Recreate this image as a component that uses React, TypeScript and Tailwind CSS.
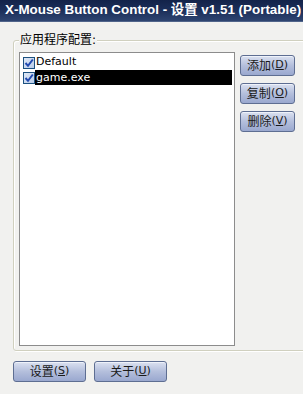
import React from "react";

const CJK = '"DejaVu Sans", "Noto Sans CJK SC", sans-serif';

function Check() {
  return (
    <div className="w-[12px] h-[12px] border border-[#1c5180] bg-gradient-to-br from-[#dfe8f6] to-[#b8cbe8] flex items-center justify-center shrink-0">
      <svg width="10" height="10" viewBox="0 0 10 10">
        <path d="M1.5 5 L4 7.8 L8.8 1.5" stroke="#2149b0" strokeWidth="2" fill="none" />
      </svg>
    </div>
  );
}

function Btn({ label, k, w }: { label: string; k: string; w: string }) {
  return (
    <div
      className={`${w} h-[21px] rounded-[3px] border border-[#5e6e92] bg-gradient-to-b from-[#dbe1f0] via-[#b4bfdc] to-[#9aa8cf] flex items-center justify-center text-[12px] text-[#1a1a1a] shadow-[inset_0_1px_0_#eef2fa]`}
      style={{ fontFamily: CJK }}
    >
      <span>{label}</span>
      <span className="text-[11px]">(</span>
      <span className="text-[11px] underline">{k}</span>
      <span className="text-[11px]">)</span>
    </div>
  );
}

export default function App() {
  return (
    <div className="w-[303px] h-[394px] bg-[#f1f1ef] overflow-hidden flex flex-col" style={{ fontFamily: CJK }}>
      <div className="h-[22px] bg-gradient-to-b from-[#13234a] via-[#1c2f5a] to-[#2e4470] border-b border-[#50648a] flex items-center pl-[5px] shrink-0">
        <span className="text-white font-bold text-[13.4px] whitespace-nowrap" style={{ fontFamily: '"Liberation Sans", "Noto Sans CJK SC", sans-serif' }}>
          X-Mouse Button Control - 设置 v1.51 (Portable)
        </span>
      </div>
      <div className="relative flex-1">
        <div className="absolute left-[13px] top-[18px] w-[310px] h-[311px] border border-[#d0d0bf] rounded-[3px] shadow-[inset_1px_1px_0_#ffffff,1px_1px_0_#ffffff]" />
        <div className="absolute left-[19px] top-[11px] bg-[#f1f1ef] px-[1px] text-[12px] leading-[14px] text-black">应用程序配置:</div>
        <div className="absolute left-[19px] top-[30px] w-[216px] h-[294px] bg-white border border-[#8c8c8c] py-[2px] pl-[3px] pr-[2px] flex flex-col">
          <div className="flex items-center h-[15px]">
            <Check />
            <span className="text-[11px] ml-[1px] text-black" style={{ fontFamily: '"DejaVu Sans", sans-serif' }}>Default</span>
          </div>
          <div className="flex items-center h-[15px]">
            <Check />
            <span className="flex-1 h-[15px] bg-black text-white text-[11px] pl-[1px] leading-[15px]" style={{ fontFamily: '"DejaVu Sans", sans-serif' }}>game.exe</span>
          </div>
        </div>
        <div className="absolute left-[240px] top-[33px] flex flex-col gap-[7px]">
          <Btn label="添加" k="D" w="w-[55px]" />
          <Btn label="复制" k="O" w="w-[55px]" />
          <Btn label="删除" k="V" w="w-[55px]" />
        </div>
        <div className="absolute left-[13px] top-[339px] flex gap-[8px]">
          <Btn label="设置" k="S" w="w-[73px]" />
          <Btn label="关于" k="U" w="w-[73px]" />
        </div>
      </div>
    </div>
  );
}
